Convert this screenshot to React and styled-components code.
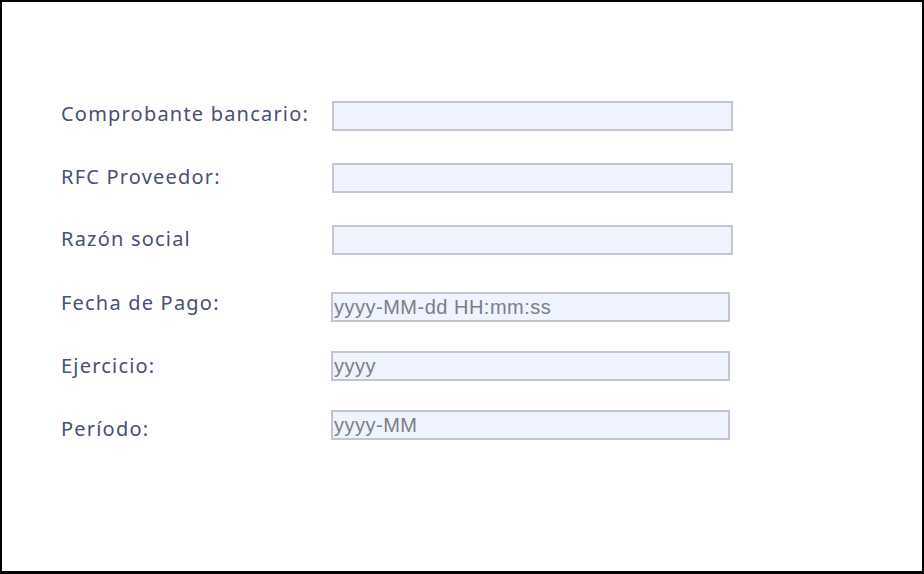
import React from 'react'
import styled, { createGlobalStyle } from 'styled-components'

const GlobalStyle = createGlobalStyle`
  html, body {
    margin: 0;
    padding: 0;
    background: #ffffff;
  }
  * {
    box-sizing: border-box;
  }
`;

const Frame = styled.div`
  width: 924px;
  height: 574px;
  border: 2px solid #000;
  border-bottom-width: 3px;
  background: #fff;
  padding: 99px 0 0 59px;
`;

const Form = styled.form`
  display: flex;
  flex-direction: column;
`;

const Group = styled.div`
  display: flex;
  flex-direction: column;
  gap: ${props => props.$gap}px;
  margin-bottom: ${props => props.$after || 0}px;
`;

const Row = styled.div`
  display: grid;
  grid-template-columns: ${props => props.$labelWidth}px auto;
  align-items: center;
  height: 30px;
`;

const Label = styled.label`
  font-family: "Noto Sans", "Open Sans", sans-serif;
  font-size: 20px;
  color: #4a5070;
  letter-spacing: 1.2px;
  white-space: nowrap;
  position: relative;
  top: ${props => props.$shift || 0}px;
`;

const Input = styled.input`
  width: ${props => props.$width}px;
  height: 30px;
  margin: 0;
  padding: 0 1px;
  background: #eef3fd;
  border: 2px solid #c3c6d0;
  border-radius: 0;
  outline: none;
  font-family: "Liberation Sans", Arial, sans-serif;
  font-size: 20px;
  letter-spacing: 0.5px;
  color: #555;
  &::placeholder {
    color: #7b7e86;
    opacity: 1;
  }
`;

const textFields = [
  { label: 'Comprobante bancario:', shift: -3 },
  { label: 'RFC Proveedor:', shift: -2 },
  { label: 'Razón social', shift: -2 },
];

const dateFields = [
  { label: 'Fecha de Pago:', placeholder: 'yyyy-MM-dd HH:mm:ss', shift: -5 },
  { label: 'Ejercicio:', placeholder: 'yyyy', shift: -1 },
  { label: 'Período:', placeholder: 'yyyy-MM', shift: 3 },
];

const App = () => {
  return (
    <>
      <GlobalStyle />
      <Frame>
        <Form>
          <Group $gap={32} $after={37}>
            {textFields.map(f => (
              <Row key={f.label} $labelWidth={271}>
                <Label $shift={f.shift}>{f.label}</Label>
                <Input type="text" $width={401} />
              </Row>
            ))}
          </Group>
          <Group $gap={29}>
            {dateFields.map(f => (
              <Row key={f.label} $labelWidth={270}>
                <Label $shift={f.shift}>{f.label}</Label>
                <Input type="text" $width={399} placeholder={f.placeholder} />
              </Row>
            ))}
          </Group>
        </Form>
      </Frame>
    </>
  )
}

export default App
